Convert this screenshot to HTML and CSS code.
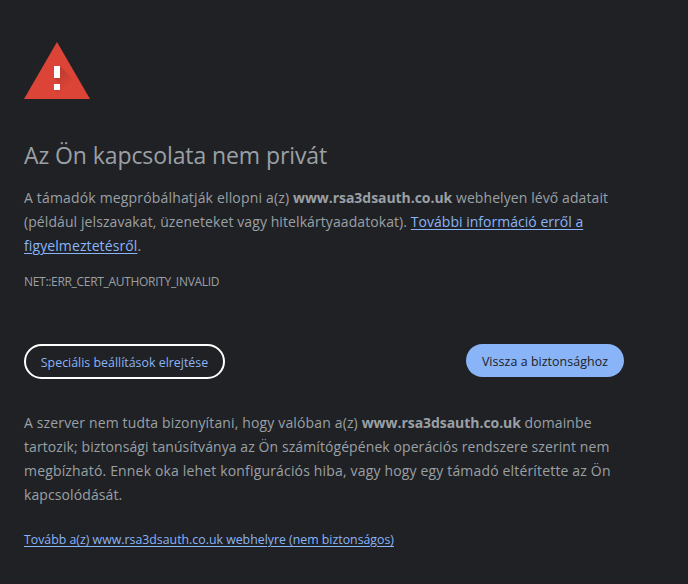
FILE: index.html
```html
<!DOCTYPE html>
<html lang="hu">
<head>
<meta charset="utf-8">
<title>Adatvédelmi hiba</title>
<link rel="stylesheet" href="styles.css">
</head>
<body>
<main class="page">
  <svg class="icon" width="66" height="57" viewBox="0 0 66 57">
    <defs>
      <linearGradient id="shade" gradientUnits="userSpaceOnUse" x1="32" y1="28" x2="46" y2="42">
        <stop offset="0" stop-color="#000" stop-opacity=".16"/>
        <stop offset="1" stop-color="#000" stop-opacity="0"/>
      </linearGradient>
    </defs>
    <path fill="#db4437" d="M33 0 66 57H0Z"/>
    <path fill="url(#shade)" d="M36 24 55 43 62 57H39L30 48 36 42 30 36Z"/>
    <path fill="#fff" d="M30 24h6v12h-6zM30 42h6v6h-6z"/>
  </svg>
  <h1 class="title">Az Ön kapcsolata nem privát</h1>
  <p class="text">
    <span class="line l1">A támadók megpróbálhatják ellopni a(z) <b>www.rsa3dsauth.co.uk</b><span class="rest"> webhelyen lévő adatait</span></span>
    <span class="line l2">(például jelszavakat, üzeneteket vagy hitelkártyaadatokat). <a href="#">További információ erről a</a></span>
    <span class="line l3"><a href="#">figyelmeztetésről</a>.</span>
  </p>
  <p class="code">NET::ERR_CERT_AUTHORITY_INVALID</p>
  <div class="buttons">
    <button class="btn outlined">Speciális beállítások elrejtése</button>
    <button class="btn primary">Vissza a biztonsághoz</button>
  </div>
  <p class="text details">
    <span class="line l4">A szerver nem tudta bizonyítani, hogy valóban a(z) <b>www.rsa3dsauth.co.uk</b><span class="rest"> domainbe</span></span>
    <span class="line l5">tartozik; biztonsági tanúsítványa az Ön számítógépének operációs rendszere szerint nem</span>
    <span class="line l6">megbízható. Ennek oka lehet konfigurációs hiba, vagy hogy egy támadó eltérítette az Ön</span>
    <span class="line l7">kapcsolódását.</span>
  </p>
  <p class="proceed"><a href="#">Tovább a(z) www.rsa3dsauth.co.uk webhelyre (nem biztonságos)</a></p>
</main>
</body>
</html>
```
FILE: styles.css
```css
* { box-sizing: border-box; }
body {
  margin: 0;
  background: #202124;
  color: #9aa0a6;
  font-family: "Open Sans", "Noto Sans", sans-serif;
  font-size: 14px;
  line-height: 24px;
}
.page { height: 584px; padding: 42px 64px 0 24px; border-bottom: 1px solid #231d20; overflow: hidden; }
.icon { display: block; }
.title { margin: 40px 0 0; font-size: 23px; font-weight: 400; line-height: 32px; letter-spacing: -.09px; white-space: nowrap; }
.text { margin: 15px 0 0; }
.line { display: block; width: max-content; white-space: nowrap; }
.l1, .l6 { letter-spacing: .165px; }
.l4 { letter-spacing: .145px; }
.l2, .l5 { letter-spacing: .085px; }
.l2 a { letter-spacing: .02px; }
.l3, .l7 { letter-spacing: .1px; }
b { letter-spacing: -.05px; }
.rest { letter-spacing: .09px; }
a { color: #8ab4f8; text-decoration: underline; text-underline-offset: 2px; text-decoration-thickness: 1px; }
.code { margin: 14px 0 0; font-size: 12px; line-height: 20px; letter-spacing: -.31px; }
.buttons { display: flex; justify-content: space-between; align-items: flex-start; margin-top: 52px; height: 35px; }
.btn { font: 12.4px/16px "Open Sans", "Noto Sans", sans-serif; border: 0; border-radius: 18px; padding: 2px 0 0; white-space: nowrap; }
.outlined { width: 201px; height: 35px; border: 2px solid #fff; background: #202124; color: #8ab4f8; }
.primary { width: 158px; height: 33px; background: #8ab4f8; color: #202124; letter-spacing: .07px; }
.details { margin-top: 32px; }
.proceed { margin: 22px 0 0; font-size: 12.33px; line-height: 20px; padding-top: 1px; white-space: nowrap; }
```
